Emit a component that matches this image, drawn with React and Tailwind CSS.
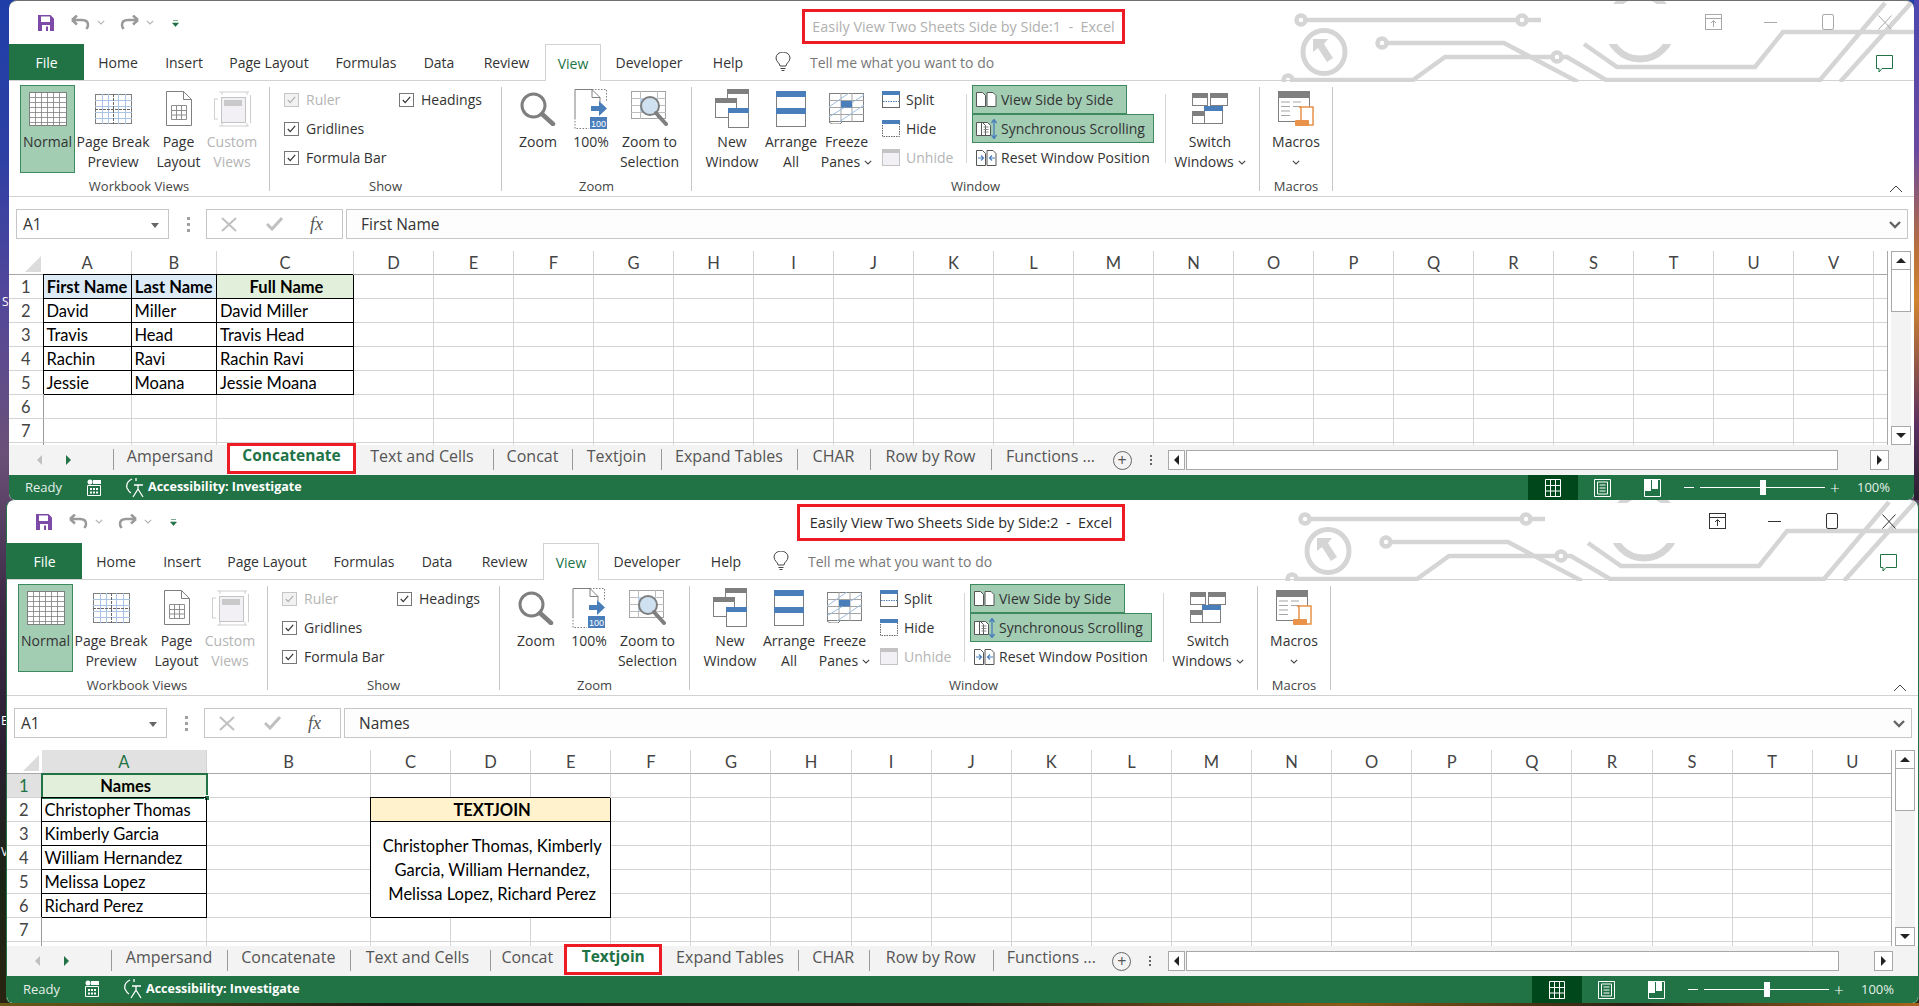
import React from 'react'

const GRAY = '#7f7f7f'
const BLUE = '#4a7ebb'

const COLS1 = [34.5, 88, 85.5, 137, ...Array(20).fill(80)]
const COLS2 = [34.5, 165.5, 164, ...Array(19).fill(80.1)]

const LETTERS = 'ABCDEFGHIJKLMNOPQRSTUVW'.split('')

const SHEET1 = {
  A1: { t: 'First Name', cls: 'font-bold text-center bg-[#ddebf7] !pl-0', box: true },
  B1: { t: 'Last Name', cls: 'font-bold text-center bg-[#ddebf7] !pl-0', box: true },
  C1: { t: 'Full Name', cls: 'font-bold text-center bg-[#e2efda]', box: true },
  A2: { t: 'David', box: true }, B2: { t: 'Miller', box: true }, C2: { t: 'David Miller', box: true },
  A3: { t: 'Travis', box: true }, B3: { t: 'Head', box: true }, C3: { t: 'Travis Head', box: true },
  A4: { t: 'Rachin', box: true }, B4: { t: 'Ravi', box: true }, C4: { t: 'Rachin Ravi', box: true },
  A5: { t: 'Jessie', box: true }, B5: { t: 'Moana', box: true }, C5: { t: 'Jessie Moana', box: true },
}

const SHEET2 = {
  A1: { t: 'Names', cls: 'font-bold text-center bg-[#e2efda]', selected: true },
  A2: { t: 'Christopher Thomas', box: true },
  A3: { t: 'Kimberly Garcia', box: true },
  A4: { t: 'William Hernandez', box: true },
  A5: { t: 'Melissa Lopez', box: true },
  A6: { t: 'Richard Perez', box: true },
  C2: { t: 'TEXTJOIN', cls: 'font-bold text-center bg-[#fff2cc] col-span-3', box: true, skip: ['D2', 'E2'] },
  C3: {
    t: <>Christopher Thomas, Kimberly<br />Garcia, William Hernandez,<br />Melissa Lopez, Richard Perez</>,
    cls: 'text-center col-span-3 row-span-4 !leading-[24px] flex items-center justify-center',
    box: true,
    skip: ['D3', 'E3', 'C4', 'D4', 'E4', 'C5', 'D5', 'E5', 'C6', 'D6', 'E6'],
  },
}

const WINDOWS = [
  {
    id: 1,
    shell: 'ml-[9px] w-[1905px] h-[500px] border-t border-[#6f6f6f] rounded-t-lg rounded-b-md',
    title: 'Easily View Two Sheets Side by Side:1  -  Excel',
    titleCls: 'text-[#b0b0b0] ml-[793px] w-[323px] h-[35px] mt-[8px]',
    ctrl: '#a8a8a8',
    formula: 'First Name',
    cols: COLS1,
    sheet: SHEET1,
    gridH: 'h-[194px]',
    tabWidths: [114, 129, 137, 79, 89, 136, 73, 121, 119],
    active: 1,
    statusH: 'h-[25px]',
    trackGap: 'ml-[32px]',
    selCol: null,
  },
  {
    id: 2,
    shell: 'ml-[6px] w-[1913px] h-[503px] border-x border-[#217346] rounded-t-lg rounded-b-md',
    title: 'Easily View Two Sheets Side by Side:2  -  Excel',
    titleCls: 'text-[#2b2b2b] ml-[790px] w-[328px] h-[37px] mt-[4px]',
    ctrl: '#333333',
    formula: 'Names',
    cols: COLS2,
    sheet: SHEET2,
    gridH: 'h-[196px]',
    tabWidths: [116, 122.7, 140.6, 74, 98, 135.5, 71, 124, 117],
    active: 4,
    statusH: 'h-[27px]',
    trackGap: 'ml-[35px]',
    selCol: 'A',
  },
]

const TAB_NAMES = ['Ampersand', 'Concatenate', 'Text and Cells', 'Concat', 'Textjoin', 'Expand Tables', 'CHAR', 'Row by Row', 'Functions ...']

const RIBBON_TABS = [
  ['Home', 'w-[68px]'], ['Insert', 'w-[64px]'], ['Page Layout', 'w-[106px]'], ['Formulas', 'w-[88px]'],
  ['Data', 'w-[58px]'], ['Review', 'w-[77px]'],
]

/* ---------- ribbon icons ---------- */

const NormalIcon = () => (
  <svg width="38" height="34" viewBox="0 0 38 34">
    <rect x="0.5" y="0.5" width="37" height="33" fill="#fff" stroke={GRAY} />
    {[5.5, 10.5, 15.5, 20.5, 25.5, 30.5].map(y => <line key={y} x1="0" x2="38" y1={y} y2={y} stroke={GRAY} strokeWidth="0.8" />)}
    {[6.5, 12.5, 18.5, 24.5, 30.5].map(x => <line key={x} x1={x} x2={x} y1="0" y2="34" stroke={GRAY} strokeWidth="0.8" />)}
  </svg>
)

const BreakIcon = () => (
  <svg width="37" height="30" viewBox="0 0 37 30">
    <rect x="0.5" y="0.5" width="36" height="29" fill="#fff" stroke={GRAY} />
    {[6.5, 12.5, 18.5, 24.5].map(y => <line key={y} x1="0" x2="37" y1={y} y2={y} stroke="#a9c4e4" />)}
    {[7.5, 13.5, 23.5, 30.5].map(x => <line key={x} x1={x} x2={x} y1="0" y2="30" stroke="#a9c4e4" />)}
    <line x1="18.5" x2="18.5" y1="0" y2="30" stroke="#666" strokeDasharray="3 1" />
    <line x1="0" x2="37" y1="15.5" y2="15.5" stroke="#666" strokeDasharray="3 1" />
  </svg>
)

const PageLayoutIcon = () => (
  <svg width="26" height="35" viewBox="0 0 26 35">
    <path d="M.5.5h17l8 8v26H.5z" fill="#fff" stroke={GRAY} />
    <path d="M17.5.5v8h8" fill="none" stroke={GRAY} />
    <path d="M5.5 14.5h15v14h-15zM5.5 19.5h15M5.5 24h15M10.5 14.5v14M15.5 14.5v14" fill="none" stroke="#8f8f8f" />
  </svg>
)

const CustomViewsIcon = () => (
  <svg width="37" height="36" viewBox="0 0 37 36">
    <path d="M5 1h30M5 35h30M0.5 8v20M36.5 4v28M8 1v3M33 1v3M8 32v3M33 32v3M0 8h4M0 28h4" stroke="#cfcfcf" fill="none" />
    <rect x="7.5" y="6.5" width="24" height="25" fill="#f2eff5" stroke="#c4c4c4" />
    <rect x="10" y="9" width="18" height="6" fill="#c9c9c9" />
  </svg>
)

const ZoomIcon = () => (
  <svg width="36" height="34" viewBox="0 0 36 34">
    <circle cx="13.5" cy="13.5" r="11.5" fill="#fff" stroke={GRAY} strokeWidth="3" />
    <path d="M22 22l11 10" stroke={GRAY} strokeWidth="4.5" strokeLinecap="round" />
  </svg>
)

const HundredIcon = () => (
  <svg width="34" height="40" viewBox="0 0 34 40">
    <path d="M1 29V.5h17l8 8V13" fill="#fff" stroke={GRAY} />
    <path d="M18 .5v8h8" fill="none" stroke={GRAY} />
    <path d="M18 .5h14.5v12" fill="none" stroke={GRAY} strokeDasharray="1.5 1.5" />
    <path d="M1 29v10.5h14" fill="none" stroke={GRAY} strokeDasharray="1.5 1.5" />
    <path d="M17 17h8v-5l8 7.5-8 7.5v-5h-8z" fill={BLUE} />
    <rect x="16" y="28" width="17" height="12" fill={BLUE} />
    <text x="24.5" y="37.5" fontSize="9" fill="#fff" textAnchor="middle" fontFamily="Liberation Sans">100</text>
  </svg>
)

const ZoomSelIcon = () => (
  <svg width="38" height="35" viewBox="0 0 38 35">
    <rect x="0.5" y="0.5" width="34" height="27" fill="#fff" stroke="#a5a5a5" />
    <path d="M0 7.5h35M0 14.5h35M0 21.5h35M9.5 0v28M26.5 0v28" stroke="#bdbdbd" />
    <rect x="9" y="7" width="18" height="14" fill="#bdd3ea" />
    <circle cx="19" cy="15" r="9" fill="#cfe0f1" stroke={GRAY} strokeWidth="2" />
    <path d="M25 22l10 11" stroke={GRAY} strokeWidth="4" strokeLinecap="round" />
  </svg>
)

const MiniWin = ({ x, y, w, h, head }) => (
  <g>
    <rect x={x + 0.5} y={y + 0.5} width={w} height={h} fill="#fff" stroke={GRAY} />
    <rect x={x} y={y} width={w + 1} height="5" fill={head} />
  </g>
)

const NewWindowIcon = () => (
  <svg width="35" height="39" viewBox="0 0 35 39">
    <MiniWin x={12} y={0} w={21} h={19} head={GRAY} />
    <MiniWin x={0} y={9} w={21} h={19} head={GRAY} />
    <MiniWin x={13} y={19} w={20} h={19} head={BLUE} />
  </svg>
)

const ArrangeIcon = () => (
  <svg width="30" height="36" viewBox="0 0 30 36">
    <rect x="0.5" y="0.5" width="29" height="35" fill="#fff" stroke={GRAY} />
    <rect x="0" y="0" width="30" height="6" fill={BLUE} />
    <rect x="0" y="17" width="30" height="6" fill={BLUE} />
  </svg>
)

const FreezeIcon = () => (
  <svg width="35" height="31" viewBox="0 0 35 31">
    <rect x="0.5" y="0.5" width="34" height="28" fill="#fff" stroke={GRAY} />
    <path d="M0 7.5h35M0 14.5h35M0 21.5h35M12 0v29M23 0v29" stroke="#a5a5a5" />
    <path d="M0 14L20 0M0 24L35 2M10 29L35 12" stroke="#9dbde0" />
    <rect x="12" y="8" width="11" height="6.5" fill={BLUE} />
    <path d="M0 29l3 2h8l2-2" fill="none" stroke={GRAY} />
  </svg>
)

const SplitIcon = () => (
  <svg width="18" height="17" viewBox="0 0 18 17">
    <rect x="0.5" y="0.5" width="17" height="16" fill="#fff" stroke="#666" />
    <rect width="18" height="4" fill={BLUE} />
    <line x1="1" x2="17" y1="10.5" y2="10.5" stroke={BLUE} strokeDasharray="1.5 1" />
  </svg>
)

const HideIcon = () => (
  <svg width="18" height="17" viewBox="0 0 18 17">
    <rect x="0.5" y="0.5" width="17" height="16" fill="#fff" stroke="#666" strokeDasharray="1.5 1" />
    <rect width="18" height="4" fill={BLUE} />
  </svg>
)

const UnhideIcon = () => (
  <svg width="18" height="17" viewBox="0 0 18 17">
    <rect x="0.5" y="0.5" width="17" height="16" fill="#f2eff5" stroke="#c4c4c4" />
    <rect width="18" height="4" fill="#c4c4c4" />
  </svg>
)

const SideBySideIcon = () => (
  <svg width="21" height="15" viewBox="0 0 21 15">
    <path d="M.5 14.5V.5h6l3 3v11zM11 14.5V.5h6l3 3v11z" fill="#fff" stroke="#555" />
  </svg>
)

const SyncIcon = () => (
  <svg width="21" height="20" viewBox="0 0 21 20">
    <path d="M.5 16.5V3.5h6l3 3v10zM5.5 16.5V3.5h6l3 3v10z" fill="#fff" stroke="#555" />
    <path d="M7.5 8h5M7.5 10.5h5M7.5 13h5" stroke="#888" />
    <path d="M18 1v18M15.5 4L18 .5 20.5 4M15.5 16l2.5 3.5 2.5-3.5" stroke={BLUE} fill="none" strokeWidth="1.3" />
  </svg>
)

const ResetIcon = () => (
  <svg width="21" height="16" viewBox="0 0 21 16">
    <path d="M.5 15.5V.5h6l3 3v12zM11 15.5V.5h6l3 3v12z" fill="#fff" stroke="#555" />
    <path d="M2 8h5M5 5.5L7.5 8 5 10.5M19 8h-5M16 5.5L13.5 8l2.5 2.5" stroke={BLUE} fill="none" strokeWidth="1.2" />
  </svg>
)

const SwitchIcon = () => (
  <svg width="36" height="31" viewBox="0 0 36 31">
    <MiniWin x={0} y={0} w={15} h={12} head={GRAY} />
    <MiniWin x={18} y={0} w={17} h={12} head={GRAY} />
    <MiniWin x={0} y={18} w={13} h={12} head={GRAY} />
    <MiniWin x={12} y={13} w={18} h={17} head={BLUE} />
  </svg>
)

const MacrosIcon = () => (
  <svg width="37" height="35" viewBox="0 0 37 35">
    <rect x="0.5" y="0.5" width="31" height="30" fill="#fff" stroke={GRAY} />
    <rect width="32" height="7" fill={GRAY} />
    <path d="M3 11h9M15 11h8M3 15.5h9M15 15.5h8M3 20h9M3 24.5h9" stroke="#a5a5a5" />
    <path d="M21 16h14v18H21c1-1 2-2 2-4V18c0-1-1-2-2-2z" fill="#fff" stroke="#e8924a" strokeWidth="1.5" />
    <rect x="17" y="29" width="14" height="6" rx="1" fill="#e8924a" />
  </svg>
)

const Chevron = ({ cls = '' }) => (
  <svg width="8" height="5" viewBox="0 0 8 5" className={cls}>
    <path d="M.8.8L4 4l3.2-3.2" fill="none" stroke="#444" strokeWidth="1.1" />
  </svg>
)

const Check = ({ dim }) => (
  <span className={`flex h-[14px] w-[15px] shrink-0 items-center justify-center border ${dim ? 'border-[#c6c6c6] bg-[#f2f2f2]' : 'border-[#777] bg-white'}`}>
    <svg width="9" height="8" viewBox="0 0 9 8">
      <path d="M.8 4l2.4 2.6L8.2.8" fill="none" stroke={dim ? '#b0b0b0' : '#333'} strokeWidth="1.2" />
    </svg>
  </span>
)

/* ---------- ribbon parts ---------- */

const BigBtn = ({ w, icon, lines, dim, on, chev }) => (
  <div className={`flex shrink-0 flex-col items-center ${w} ${on ? 'h-[88px] border border-[#3d8a5f] bg-[#a2cdb3]' : ''}`}>
    <div className={`flex w-full items-center justify-center ${on ? 'h-[46px]' : 'h-[47px]'}`}>{icon}</div>
    {lines.map((l, i) => (
      <div key={i} className={`flex h-[20px] items-center gap-[4px] whitespace-nowrap leading-[20px] ${dim ? 'text-[#b4b4b4]' : 'text-[#333]'}`}>
        {l}
        {chev && i === lines.length - 1 ? <Chevron /> : null}
      </div>
    ))}
  </div>
)

const Group = ({ w, label, children, cls = '' }) => (
  <div className={`flex shrink-0 ${w}`}>
    <div className="flex min-w-0 flex-1 flex-col">
      <div className={`flex h-[92px] ${cls}`}>{children}</div>
      <div className="flex h-[19px] items-center justify-center text-[13px] text-[#444]">{label}</div>
    </div>
    <div className="mt-[2px] h-[104px] w-px bg-[#c6c6c6]" />
  </div>
)

const SmallRow = ({ icon, children, dim, cls = '' }) => (
  <div className={`flex h-[29px] items-center whitespace-nowrap ${dim ? 'text-[#b4b4b4]' : 'text-[#333]'} ${cls}`}>
    {icon}
    {children}
  </div>
)

const Ribbon = () => (
  <div className="flex h-[116px] border-b border-[#d2d2d2] bg-white pt-[4px] text-[14px]">
    <Group w="w-[261px]" label="Workbook Views" cls="pl-[11px]">
      <BigBtn w="w-[55px]" on icon={<NormalIcon />} lines={['Normal']} />
      <BigBtn w="w-[76px]" icon={<BreakIcon />} lines={['Page Break', 'Preview']} />
      <BigBtn w="w-[55px]" icon={<PageLayoutIcon />} lines={['Page', 'Layout']} />
      <BigBtn w="w-[52px]" dim icon={<CustomViewsIcon />} lines={['Custom', 'Views']} />
    </Group>
    <Group w="w-[232px]" label="Show" cls="pl-[14px]">
      <div className="w-[115px]">
        <SmallRow dim icon={<Check dim />}><span className="ml-[7px]">Ruler</span></SmallRow>
        <SmallRow icon={<Check />}><span className="ml-[7px]">Gridlines</span></SmallRow>
        <SmallRow icon={<Check />}><span className="ml-[7px]">Formula Bar</span></SmallRow>
      </div>
      <SmallRow icon={<Check />}><span className="ml-[7px]">Headings</span></SmallRow>
    </Group>
    <Group w="w-[190px]" label="Zoom" cls="pl-[1px]">
      <BigBtn w="w-[70px]" icon={<ZoomIcon />} lines={['Zoom']} />
      <BigBtn w="w-[36px]" icon={<HundredIcon />} lines={['100%']} />
      <BigBtn w="w-[81px]" icon={<ZoomSelIcon />} lines={['Zoom to', 'Selection']} />
    </Group>
    <Group w="w-[568px]" label="Window" cls="pl-[1px]">
      <BigBtn w="w-[78px]" icon={<NewWindowIcon />} lines={['New', 'Window']} />
      <BigBtn w="w-[40px]" icon={<ArrangeIcon />} lines={['Arrange', 'All']} />
      <BigBtn w="w-[71px]" chev icon={<FreezeIcon />} lines={['Freeze', 'Panes']} />
      <div className="w-[84px]">
        <SmallRow icon={<SplitIcon />}><span className="ml-[6px]">Split</span></SmallRow>
        <SmallRow icon={<HideIcon />}><span className="ml-[6px]">Hide</span></SmallRow>
        <SmallRow dim icon={<UnhideIcon />}><span className="ml-[6px]">Unhide</span></SmallRow>
      </div>
      <div className="mt-[9px] h-[69px] w-px bg-[#d6d6d6]" />
      <div className="ml-[5px] w-[193px]">
        <SmallRow cls="w-[155px] border border-[#3d8a5f] bg-[#a2cdb3] pl-[3px]" icon={<SideBySideIcon />}><span className="ml-[4px]">View Side by Side</span></SmallRow>
        <SmallRow cls="w-[182px] border border-[#3d8a5f] bg-[#a2cdb3] pl-[3px]" icon={<SyncIcon />}><span className="ml-[4px]">Synchronous Scrolling</span></SmallRow>
        <SmallRow cls="pl-[4px]" icon={<ResetIcon />}><span className="ml-[4px]">Reset Window Position</span></SmallRow>
      </div>
      <div className="mt-[9px] h-[69px] w-px bg-[#d6d6d6]" />
      <BigBtn w="w-[88px]" chev icon={<SwitchIcon />} lines={['Switch', 'Windows']} />
    </Group>
    <Group w="w-[73px]" label="Macros">
      <BigBtn w="w-[72px]" icon={<MacrosIcon />} lines={['Macros', <Chevron key="c" />]} />
    </Group>
    <div className="relative flex-1">
      <svg width="14" height="8" viewBox="0 0 14 8" className="absolute right-[11px] bottom-[3px]">
        <path d="M1 7l6-6 6 6" fill="none" stroke="#444" />
      </svg>
    </div>
  </div>
)

/* ---------- circuit art behind the title bar ---------- */

const CircuitArt = () => (
  <svg width="634" height="81" viewBox="1280 0 634 81" className="pointer-events-none absolute top-0 right-0" fill="none" stroke="#d5d5d5" strokeWidth="4.5">
    <circle cx="1640" cy="26" r="32" strokeWidth="7" />
    <rect x="1580" y="3" width="99" height="40" fill="#fff" stroke="none" />
    <path d="M1305 19h236" />
    <circle cx="1301" cy="19" r="4.5" fill="#fff" />
    <circle cx="1522" cy="19" r="4.5" fill="#fff" />
    <ellipse cx="1324" cy="51" rx="21" ry="21.5" strokeWidth="5" />
    <path d="M1313 38h15l-4 5 9 14-6 4-9-14-5 4z" fill="#d5d5d5" stroke="none" />
    <path d="M1386 42h118l74 39" />
    <circle cx="1382" cy="42" r="4.5" fill="#fff" />
    <path d="M1292 79h121l32-23h122l39 23h214l65-77" />
    <path d="M1840 81l71-79" />
    <circle cx="1288" cy="79" r="4.5" fill="#fff" />
    <circle cx="1557" cy="56" r="4.5" fill="#fff" />
    <path d="M1584 43l33 23h138l28-35h131" />
  </svg>
)

const QuickAccess = () => (
  <div className="flex h-[43px] w-[180px] items-center">
    <svg width="16" height="16" viewBox="0 0 16 16" className="ml-[29px]">
      <path d="M0 0h12.5L16 3.5V16H0z" fill="#7e4aa8" />
      <rect x="3" y="1.5" width="9" height="5.5" fill="#fff" />
      <rect x="4" y="10" width="8" height="6" fill="#fff" />
      <rect x="8" y="11.5" width="2" height="4.5" fill="#7e4aa8" />
    </svg>
    <svg width="19" height="15" viewBox="0 0 19 15" className="ml-[17px]">
      <path d="M1 5h10c4 0 6 2 6 5 0 2-1 3-1.5 4M1 5l5-4.5M1 5l5 4.5" fill="none" stroke="#9a9a9a" strokeWidth="2.5" />
    </svg>
    <Chevron cls="ml-[7px] opacity-40" />
    <svg width="19" height="15" viewBox="0 0 19 15" className="ml-[15px]">
      <path d="M18 5H8c-4 0-6 2-6 5 0 2 1 3 1.5 4M18 5l-5-4.5M18 5l-5 4.5" fill="none" stroke="#9a9a9a" strokeWidth="2.5" />
    </svg>
    <Chevron cls="ml-[7px] opacity-40" />
    <svg width="7" height="8" viewBox="0 0 7 8" className="ml-[18px]">
      <path d="M1 1.5h5M.5 4h6l-3 3.5z" fill="#217346" stroke="#217346" strokeWidth="0.6" />
    </svg>
  </div>
)

const WindowControls = ({ color }) => (
  <div className="absolute top-[8px] right-[22px] flex h-[26px] items-center" style={{ color }}>
    <svg width="18" height="17" viewBox="0 0 18 17" className="mr-[41px]" fill="none" stroke="currentColor">
      <rect x="0.5" y="0.5" width="16" height="15" />
      <path d="M0 4.5h17M8.5 13V7M6 9l2.5-2.5L11 9" />
    </svg>
    <span className="mr-[45px] h-px w-[13px] bg-current" />
    <svg width="12" height="16" viewBox="0 0 12 16" className="mr-[44px]" fill="none" stroke="currentColor">
      <rect x="0.5" y="0.5" width="11" height="15" rx="1.5" />
    </svg>
    <svg width="14" height="15" viewBox="0 0 14 15" fill="none" stroke="currentColor">
      <path d="M.5.5l13 14M13.5.5l-13 14" />
    </svg>
  </div>
)

const TabsRow = () => (
  <div className="relative flex h-[37px] items-stretch border-b border-[#d2d2d2] text-[14px] text-[#333]">
    <div className="flex w-[75px] items-center justify-center bg-[#217346] text-white">File</div>
    {RIBBON_TABS.map(([n, w]) => (
      <div key={n} className={`flex items-center justify-center ${w}`}>{n}</div>
    ))}
    <div className="relative z-10 -mb-px flex w-[56px] items-center justify-center border-x border-t border-[#d2d2d2] bg-white text-[#217346]">View</div>
    <div className="flex w-[100px] items-center justify-center pr-[4px]">Developer</div>
    <div className="flex w-[54px] items-center justify-center">Help</div>
    <div className="flex w-[55px] items-center justify-center">
      <svg width="16" height="20" viewBox="0 0 16 20" fill="none" stroke="#444">
        <path d="M5 14c0-3-4-4-4-8a7 6 0 0114 0c0 4-4 5-4 8zM5.5 16.5h5M6.5 18.5h3" />
      </svg>
    </div>
    <div className="flex items-center text-[#777]">Tell me what you want to do</div>
  </div>
)

const FormulaBar = ({ text }) => (
  <div className="flex h-[54px] items-start bg-white pt-[12px] text-[15.5px] text-[#333]">
    <div className="ml-[7px] flex h-[30px] w-[153px] items-center justify-between border border-[#c6c6c6] bg-white pt-[2px] pr-[9px] pl-[6px]">
      A1
      <span className="h-0 w-0 border-x-[4px] border-t-[5px] border-x-transparent border-t-[#666]" />
    </div>
    <div className="ml-[18px] flex h-[30px] w-[3px] flex-col items-center justify-center gap-[3px]">
      <span className="size-[3px] bg-[#a0a0a0]" />
      <span className="size-[3px] bg-[#a0a0a0]" />
      <span className="size-[3px] bg-[#a0a0a0]" />
    </div>
    <div className="ml-[16px] flex h-[30px] w-[137px] items-center border border-[#c6c6c6] bg-white pl-[14px]">
      <svg width="16" height="15" viewBox="0 0 16 15" fill="none" stroke="#c0c0c0" strokeWidth="2">
        <path d="M1 1l14 13M15 1L1 14" />
      </svg>
      <svg width="17" height="14" viewBox="0 0 17 14" fill="none" stroke="#c0c0c0" strokeWidth="3" className="ml-[29px]">
        <path d="M1 7l5 5 10-11" />
      </svg>
      <span className="ml-[27px] font-['Liberation_Serif'] text-[18px] text-[#555] italic">fx</span>
    </div>
    <div className="mr-[6px] ml-[3px] flex h-[30px] flex-1 items-center justify-between border border-[#c6c6c6] bg-[#fdfdfd] pt-[2px] pr-[6px] pl-[14px]">
      {text}
      <svg width="12" height="8" viewBox="0 0 12 8" fill="none" stroke="#666" strokeWidth="2.4">
        <path d="M1 1l5 5 5-5" />
      </svg>
    </div>
  </div>
)

/* ---------- sheet ---------- */

const Sheet = ({ win }) => {
  const covered = Object.values(win.sheet).flatMap(c => c.skip ?? [])
  const cols = win.cols
  const letters = LETTERS.slice(0, cols.length - 1)
  const rows = [1, 2, 3, 4, 5, 6, 7, 8]
  return (
    <div
      className={`grid min-w-0 flex-1 content-start overflow-hidden border-r border-[#a8a8a8] font-['Lato'] text-[16.5px] ${win.gridH}`}
      style={{ gridTemplateColumns: cols.map(c => `${c}px`).join(' '), gridAutoRows: '24px' }}
    >
      <div className="flex items-end justify-end border-b border-[#a8a8a8] pr-[3px] pb-[2px]">
        <span className="h-0 w-0 border-b-[16px] border-l-[16px] border-b-[#dcdcdc] border-l-transparent" />
      </div>
      {letters.map((l, i) => {
        const sel = win.selCol === l
        const last = i === letters.length - 1 && win.id === 1
        return (
          <div key={l} className={`flex items-center justify-center border-r border-b border-r-[#d4d4d4] border-b-[#a8a8a8] pt-[2px] ${sel ? 'bg-[#e1e1e1] text-[#217346]' : 'text-[#444]'}`}>
            {last ? '' : l}
          </div>
        )
      })}
      {rows.flatMap(r => [
        <div key={`h${r}`} className={`flex items-center justify-center border-r border-b border-r-[#9a9a9a] border-b-[#d4d4d4] pt-[2px] ${win.selCol && r === 1 ? 'bg-[#e1e1e1] text-[#217346]' : 'text-[#444]'}`}>
          {r < 8 ? r : ''}
        </div>,
        ...letters.map(l => {
          const id = `${l}${r}`
          if (covered.includes(id)) return null
          const c = win.sheet[id]
          if (!c) return <div key={id} className="border-r border-b border-[#d4d4d4]" />
          return (
            <div
              key={id}
              className={`relative z-10 whitespace-nowrap pl-[3px] leading-[25px] text-black ${c.box ? 'border-r border-b border-black shadow-[-1px_-1px_0_0_#000]' : ''} ${c.selected ? 'outline-2 -outline-offset-1 outline-[#217346]' : ''} ${c.cls ?? ''}`}
            >
              {c.t}
              {c.selected ? <span className="absolute -right-[3px] -bottom-[3px] z-20 size-[6px] border border-white bg-[#217346]" /> : null}
            </div>
          )
        }),
      ])}
    </div>
  )
}

const Tri = ({ dir }) => {
  if (dir === 'up') return <span className="h-0 w-0 border-x-[5px] border-b-[5px] border-x-transparent border-b-[#222]" />
  if (dir === 'down') return <span className="h-0 w-0 border-x-[5px] border-t-[5px] border-x-transparent border-t-[#222]" />
  if (dir === 'left') return <span className="h-0 w-0 border-y-[5px] border-r-[5px] border-y-transparent border-r-[#222]" />
  return <span className="h-0 w-0 border-y-[5px] border-l-[5px] border-y-transparent border-l-[#222]" />
}

const VScroll = () => (
  <div className="ml-[3px] flex w-[20px] shrink-0 flex-col bg-[#f3f3f3]">
    <div className="flex h-[19px] items-center justify-center border border-[#a8a8a8] bg-white"><Tri dir="up" /></div>
    <div className="h-[42px] border-x border-b border-[#a8a8a8] bg-white" />
    <div className="flex-1" />
    <div className="flex h-[19px] items-center justify-center border border-[#a8a8a8] bg-white"><Tri dir="down" /></div>
  </div>
)

const SheetTabs = ({ win }) => (
  <div className="flex h-[30px] items-stretch bg-[#f3f3f3] text-[16px] text-[#555]">
    <div className="flex w-[104px] shrink-0 items-center pl-[28px]">
      <span className="h-0 w-0 border-y-[5px] border-r-[5px] border-y-transparent border-r-[#c0c0c0]" />
      <span className="ml-[24px] h-0 w-0 border-y-[5px] border-l-[5px] border-y-transparent border-l-[#217346]" />
    </div>
    {TAB_NAMES.map((n, i) => {
      const active = i === win.active
      const prevActive = i === win.active + 1
      return (
        <div
          key={n}
          className={`relative flex shrink-0 items-center justify-center whitespace-nowrap ${active ? 'z-10 -mt-[2px] mb-[1px] border-[3px] border-[#ed1c24] bg-white pb-[5px] text-[15.5px] font-bold text-[#217346]' : 'pb-[9px]'} ${i === 2 ? 'pr-[5px]' : ''}`}
          style={{ width: win.tabWidths[i] }}
        >
          {!active && !prevActive ? <span className="absolute top-[4px] left-0 h-[21px] w-px bg-[#9a9a9a]" /> : null}
          {n}
        </div>
      )
    })}
    <div className="ml-[2px] flex w-[20px] shrink-0 items-center justify-center">
      <span className="flex size-[19px] items-center justify-center rounded-full border border-[#666] text-[16px] leading-none text-[#555]">+</span>
    </div>
    <div className="ml-[17px] flex w-[3px] flex-col items-center justify-center gap-[2px]">
      <span className="size-[2px] bg-[#666]" />
      <span className="size-[2px] bg-[#666]" />
      <span className="size-[2px] bg-[#666]" />
    </div>
    <div className="ml-[16px] flex min-w-0 flex-1 items-center pr-[25px]">
      <div className="flex h-[20px] w-[17px] shrink-0 items-center justify-center border border-[#a8a8a8] bg-white"><Tri dir="left" /></div>
      <div className="ml-px h-[20px] min-w-0 flex-1 border border-[#a8a8a8] bg-white" />
      <div className={`flex h-[20px] w-[19px] shrink-0 items-center justify-center border border-[#a8a8a8] bg-white ${win.trackGap}`}><Tri dir="right" /></div>
    </div>
  </div>
)

const StatusBar = ({ win }) => (
  <div className={`flex items-stretch rounded-b-md bg-[#217346] text-[13px] text-[#e4efe8] ${win.statusH}`}>
    <span className="ml-[16px] flex items-center">Ready</span>
    <svg width="14" height="17" viewBox="0 0 14 17" className="mt-[4px] ml-[25px]" fill="#fff">
      <circle cx="3" cy="3" r="2.5" />
      <rect x="6" y="1" width="8" height="4" />
      <path d="M.5 6.5h13v10H.5z" fill="none" stroke="#fff" />
      <path d="M3 9h2v2H3zM6 9h2v2H6zM9 9h2v2H9zM3 12.5h2v2H3zM6 12.5h2v2H6zM9 12.5h2v2H9z" />
    </svg>
    <svg width="21" height="21" viewBox="0 0 21 21" className="mt-[2px] ml-[24px]" fill="none" stroke="#fff" strokeWidth="1.3">
      <path d="M7 2C3 4 1 7 2 11c1 2 2 4 4 5M11 1v3M9 8h9M13 8v4l-5 8M13 12l5 8" />
    </svg>
    <span className="ml-[2px] flex items-center text-[12.5px] font-bold text-white">Accessibility: Investigate</span>
    <div className="flex-1" />
    <div className="flex w-[50px] items-center justify-center bg-[#00481b]">
      <svg width="16" height="18" viewBox="0 0 16 18" fill="none" stroke="#fff">
        <path d="M.5.5h15v17H.5zM.5 6.5h15M.5 12h15M5.5.5v17M10.5.5v17" />
      </svg>
    </div>
    <div className="flex w-[50px] items-center justify-center">
      <svg width="17" height="18" viewBox="0 0 17 18" fill="none" stroke="#fff">
        <path d="M.5.5h16v17H.5zM3.5 3h10v12h-10zM5.5 6h6M5.5 9h6M5.5 12h6" />
      </svg>
    </div>
    <div className="flex w-[50px] items-center justify-center">
      <svg width="17" height="18" viewBox="0 0 17 18">
        <path d="M.5.5h16v17H.5z" fill="none" stroke="#fff" />
        <path d="M0 0h7v12H0zM8 0h6v10H8z" fill="#fff" />
      </svg>
    </div>
    <div className="ml-[6px] flex w-[165px] items-center">
      <span className="h-px w-[10px] bg-white" />
      <div className="relative ml-[6px] h-px w-[125px] bg-white">
        <span className="absolute -top-[7px] left-[60px] h-[15px] w-[6px] bg-white" />
      </div>
      <span className="ml-[5px] text-[17px] leading-none font-light text-white">+</span>
    </div>
    <span className="mr-[24px] ml-[8px] flex items-center">100%</span>
  </div>
)

const ExcelWindow = ({ win }) => (
  <div className={`relative z-10 overflow-hidden bg-white font-['Open_Sans'] ${win.shell}`}>
    <CircuitArt />
    <div className="relative">
      <div className="relative h-[43px]">
        <QuickAccess />
        <div className="absolute top-0 left-0">
          <div className={`flex items-center justify-center border-[3px] border-[#ed1c24] text-[14.4px] whitespace-pre ${win.titleCls}`}>
            {win.title}
          </div>
        </div>
        <WindowControls color={win.ctrl} />
      </div>
      <TabsRow />
      <svg width="18" height="18" viewBox="0 0 18 18" className="absolute top-[54px] right-[20px]" fill="#fff" stroke="#217346">
        <path d="M.5.5h16v13H6l-3 3.5v-3.5H.5z" />
      </svg>
    </div>
    <Ribbon />
    <FormulaBar text={win.formula} />
    <div className="flex bg-white pr-[3px]">
      <Sheet win={win} />
      <VScroll />
    </div>
    <SheetTabs win={win} />
    <StatusBar win={win} />
  </div>
)

export default function App() {
  return (
    <div className="relative flex h-[1006px] w-[1919px] flex-col overflow-hidden bg-[linear-gradient(180deg,#1f3fa8_0%,#2c3fa4_15%,#54479a_30%,#6b5078_45%,#3d2a45_60%,#2a2030_75%,#1b2414_88%,#2a2412_100%)]">
      <span className="absolute top-[293px] left-[2px] font-['Open_Sans'] text-[12px] text-white">S</span>
      <span className="absolute top-[712px] left-[1px] font-['Open_Sans'] text-[12px] text-white">E</span>
      <span className="absolute top-[843px] left-[1px] font-['Open_Sans'] text-[12px] text-white">V</span>
      <div className="flex">
        <ExcelWindow win={WINDOWS[0]} />
        <div className="flex-1 bg-[linear-gradient(180deg,#4a48b0_0%,#6a4aa0_30%,#b8703c_50%,#d0862e_60%,#5a3060_85%,#2a2030_100%)]" />
      </div>
      <ExcelWindow win={WINDOWS[1]} />
      <div className="flex-1 bg-[linear-gradient(90deg,#6a5a18_0%,#1c1c14_20%,#2a2416_50%,#8a5a18_70%,#2a2014_85%,#a8641c_100%)]" />
    </div>
  )
}
